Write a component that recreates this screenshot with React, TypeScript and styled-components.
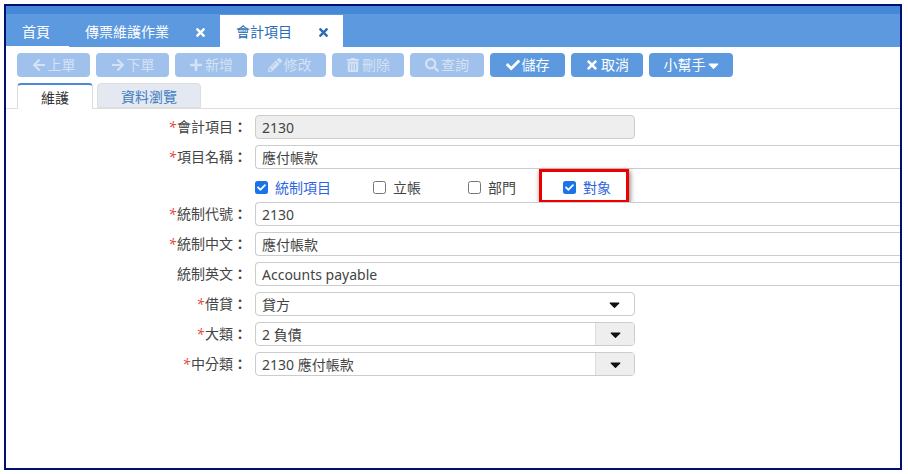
import React from "react";
import styled, { createGlobalStyle } from "styled-components";
import { FaArrowLeft, FaArrowRight, FaPlus, FaPencilAlt, FaTrashAlt, FaSearch, FaCheck, FaTimes, FaCaretDown } from "react-icons/fa";

const Global = createGlobalStyle`
  html, body { margin: 0; padding: 0; background: #fff; }
  body { font-family: "Noto Sans", "Noto Sans CJK TC", sans-serif; font-size: 14px; color: #444; }
  * { box-sizing: border-box; }
`;
const Page = styled.div`
  width: 908px; height: 474px; padding: 4px 6px 4px 4px; overflow: hidden;
`;
const Frame = styled.div`
  width: 898px; height: 466px; border: 2px solid #001072; overflow: hidden; background: #fff;
  display: flex; flex-direction: column;
`;
const Header = styled.div`
  height: 41px; flex: none; background: linear-gradient(#4588d8 0 8px, #5c99de 8px);
  display: flex; align-items: flex-end; padding-left: 0;
`;
const PageTab = styled.div<{ $active?: boolean; $first?: boolean; $w: number; $pad: number }>`
  width: ${p => p.$w}px; height: 32px; padding-left: ${p => p.$pad}px;
  display: flex; align-items: center; position: relative; font-size: 14px;
  background: ${p => (p.$active ? "#fff" : "#5c99de")};
  color: ${p => (p.$active ? "#2a6cb5" : "#fff")};
  border-bottom: ${p => (p.$first ? "1px solid #fff" : "none")};
  svg { position: absolute; right: 13px; top: 11px; width: 13px; height: 13px; }
`;
const Toolbar = styled.div`
  display: flex; gap: 6px; padding: 6px 0 0 11px; flex: none;
`;
const ToolButton = styled.div<{ $w: number; $off?: boolean }>`
  width: ${p => p.$w}px; height: 24px; border-radius: 4px;
  display: flex; align-items: center; justify-content: center; gap: 2px;
  background: ${p => (p.$off ? "#a0c1eb" : "#5c99de")};
  color: ${p => (p.$off ? "#d3e2f5" : "#fff")};
  font-size: 14px; line-height: 1;
  svg { width: 14px; height: 14px; flex: none; }
`;
const Caret = styled(FaCaretDown)`
  && { width: 17px; height: 17px; margin: 0 -3px; }
`;
const SubTabs = styled.div`
  display: flex; gap: 4px; margin-top: 6px; padding-left: 11px; height: 26px; flex: none;
  border-bottom: 1px solid #ddd;
`;
const SubTab = styled.div<{ $active?: boolean; $w: number }>`
  width: ${p => p.$w}px; height: ${p => (p.$active ? 26 : 25)}px;
  border: 1px solid #ddd; border-radius: 4px 4px 0 0;
  display: flex; align-items: center; justify-content: center; font-size: 14px;
  background: ${p => (p.$active ? "#fff" : "#e3e8f1")};
  color: ${p => (p.$active ? "#333" : "#3f7cc0")};
  border-top: ${p => (p.$active ? "2px solid #4a8ad8" : "1px solid #ddd")};
  border-bottom: ${p => (p.$active ? "none" : "1px solid #ddd")};
`;
const Form = styled.div`
  display: flex; flex-direction: column; padding-top: 6px;
`;
const Row = styled.div`
  display: flex; align-items: center; height: 24px; margin-bottom: 6px;
`;
const Label = styled.div`
  width: 240px; flex: none; text-align: right; font-size: 14px; color: #444;
  white-space: nowrap; margin-top: -2px;
`;
const Star = styled.span`
  color: #e0483c; font-style: italic; margin-right: 1px;
`;
const Colon = styled.span`
  display: inline-block; width: 13px; text-align: right; font-weight: 700;
`;
const Spacer = styled.div`
  width: 9px; flex: none;
`;
const Field = styled.div<{ $short?: boolean; $off?: boolean }>`
  width: ${p => (p.$short ? "380px" : "660px")}; height: 24px; flex: none;
  border: 1px solid #ccc; border-radius: ${p => (p.$short ? "4px" : "4px 0 0 4px")};
  ${p => !p.$short && "border-right: none;"}
  background: ${p => (p.$off ? "#eee" : "#fff")};
  display: flex; align-items: center; padding-left: 6px; font-size: 14px; color: #444;
  position: relative; overflow: hidden; white-space: nowrap;
`;
const Arrow = styled.div<{ $fill?: boolean }>`
  position: absolute; right: 0; top: 0; bottom: 0; width: 39px;
  display: flex; align-items: center; justify-content: center; color: #111;
  background: ${p => (p.$fill ? "#eee" : "transparent")};
  border-left: ${p => (p.$fill ? "1px solid #ddd" : "none")};
  svg { width: 17px; height: 17px; }
`;
const Checks = styled.div`
  display: flex; align-items: center; height: 24px; padding-left: 249px; margin: 0 0 3px;
`;
const Check = styled.label<{ $w: number; $on?: boolean }>`
  width: ${p => p.$w}px; flex: none; display: flex; align-items: center; gap: 7px; position: relative;
  color: ${p => (p.$on ? "#2f66e0" : "#444")}; font-size: 14px;
`;
const Box = styled.span<{ $on?: boolean }>`
  width: 13px; height: 13px; border-radius: 2.5px; flex: none;
  display: flex; align-items: center; justify-content: center; color: #fff;
  background: ${p => (p.$on ? "#1a73e8" : "#fff")};
  border: ${p => (p.$on ? "none" : "1px solid #767676")};
  svg { width: 9px; height: 9px; }
`;
const Highlight = styled.div`
  position: absolute; left: -24px; top: 50%; margin-top: -18px; width: 90px; height: 34px;
  border: 3px solid #ee0000; box-shadow: 1px 2px 5px rgba(0,0,0,0.55); pointer-events: none;
`;

const tools = [
  { w: 73, off: true, icon: <FaArrowLeft />, t: "上單" },
  { w: 73, off: true, icon: <FaArrowRight />, t: "下單" },
  { w: 72, off: true, icon: <FaPlus />, t: "新增" },
  { w: 73, off: true, icon: <FaPencilAlt />, t: "修改" },
  { w: 72, off: true, icon: <FaTrashAlt />, t: "刪除" },
  { w: 74, off: true, icon: <FaSearch />, t: "查詢" },
  { w: 75, icon: <FaCheck />, t: "儲存" },
  { w: 72, icon: <FaTimes />, t: "取消" },
];

const Req = ({ children, req = true }: { children: React.ReactNode; req?: boolean }) => (
  <Label>
    {req && <Star>*</Star>}
    {children}
    <Colon>：</Colon>
  </Label>
);

export default function App() {
  return (
    <Page>
      <Global />
      <Frame>
        <Header>
          <PageTab $first $w={63} $pad={16}>首頁</PageTab>
          <PageTab $w={151} $pad={16}>傳票維護作業<FaTimes /></PageTab>
          <PageTab $active $w={123} $pad={16}>會計項目<FaTimes /></PageTab>
        </Header>
        <Toolbar>
          {tools.map(b => (
            <ToolButton key={b.t} $w={b.w} $off={b.off}>{b.icon}{b.t}</ToolButton>
          ))}
          <ToolButton $w={84}>小幫手<Caret /></ToolButton>
        </Toolbar>
        <SubTabs>
          <SubTab $active $w={76}>維護</SubTab>
          <SubTab $w={104}>資料瀏覽</SubTab>
        </SubTabs>
        <Form>
          <Row><Req>會計項目</Req><Spacer /><Field $short $off>2130</Field></Row>
          <Row><Req>項目名稱</Req><Spacer /><Field>應付帳款</Field></Row>
          <Checks>
            <Check $w={118} $on><Box $on><FaCheck /></Box>統制項目</Check>
            <Check $w={95}><Box />立帳</Check>
            <Check $w={95}><Box />部門</Check>
            <Check $w={80} $on><Box $on><FaCheck /></Box>對象<Highlight /></Check>
          </Checks>
          <Row><Req>統制代號</Req><Spacer /><Field>2130</Field></Row>
          <Row><Req>統制中文</Req><Spacer /><Field>應付帳款</Field></Row>
          <Row><Req req={false}>統制英文</Req><Spacer /><Field>Accounts payable</Field></Row>
          <Row><Req>借貸</Req><Spacer /><Field $short>貸方<Arrow><FaCaretDown /></Arrow></Field></Row>
          <Row><Req>大類</Req><Spacer /><Field $short>2 負債<Arrow $fill><FaCaretDown /></Arrow></Field></Row>
          <Row><Req>中分類</Req><Spacer /><Field $short>2130 應付帳款<Arrow $fill><FaCaretDown /></Arrow></Field></Row>
        </Form>
      </Frame>
    </Page>
  );
}
